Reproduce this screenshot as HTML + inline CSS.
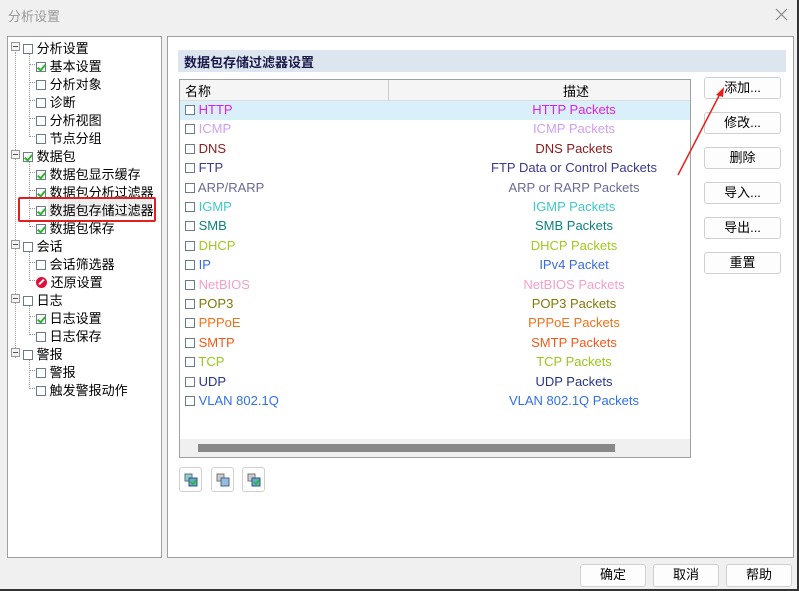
<!DOCTYPE html>
<html><head><meta charset="utf-8"><style>
*{margin:0;padding:0;box-sizing:border-box}
body{width:799px;height:591px;background:#f0f0f0;position:relative;overflow:hidden;font-family:"Liberation Sans","Noto Sans CJK SC",sans-serif;font-size:13px;color:#000}
.a{position:absolute;white-space:nowrap}
.win{position:absolute;left:0;top:0;width:799px;height:591px;border-right:2px solid #333;border-bottom:2px solid #333}
.panel{position:absolute;background:#fff;border:1px solid #a0a0a0}
.cb{display:inline-block;width:10px;height:10px;border:1px solid #6b7a8c;background:#fff;vertical-align:-1px;position:relative}
.cb.on::after{content:"";position:absolute;left:2px;top:0px;width:3px;height:6px;border-right:2px solid #2bb52b;border-bottom:2px solid #2bb52b;transform:rotate(40deg)}
.pm{display:inline-block;width:9px;height:9px;border:1px solid #999;background:#f4f4f4;position:absolute}
.pm::after{content:"";position:absolute;left:1px;top:3px;width:5px;height:1px;background:#555}
.btn{position:absolute;background:#fdfdfd;border:1px solid #d0d0d0;border-radius:3px;text-align:center;font-size:13px;line-height:20px}
.row{position:absolute;left:0;width:508px;height:19px;line-height:19px}
.row .n{position:absolute;left:5px}
.row .d{position:absolute;left:210px;width:368px;text-align:center}
.hl{position:absolute;border-left:1px dotted #999}
.hh{position:absolute;border-top:1px dotted #999;width:8px}
</style></head><body>
<div class="win"></div>
<div class="a" style="left:8px;top:6px;color:#999;font-size:13px">分析设置</div>
<svg class="a" style="left:775px;top:8px" width="13" height="13"><path d="M1 1L12 12M12 1L1 12" stroke="#888" stroke-width="1.2"/></svg>

<div class="panel" style="left:7px;top:36px;width:155px;height:522px"></div>

<div class="panel" style="left:167px;top:36px;width:627px;height:522px"></div>
<div class="a" style="left:178px;top:50px;width:608px;height:22px;background:#dde6ef"></div>
<div class="a" style="left:184px;top:52px;font-size:13px;font-weight:bold;color:#1a1a4a">数据包存储过滤器设置</div>

<div class="a" style="left:179px;top:79px;width:512px;height:379px;background:#fff;border:1px solid #a0a0a0">
  <div class="a" style="left:0;top:0;width:510px;height:21px;background:#f5f5f5;border-bottom:1px solid #ddd"></div>
  <div class="a" style="left:208px;top:0;height:21px;border-left:1px solid #ccc"></div>
  <div class="a" style="left:5px;top:1px">名称</div>
  <div class="a" style="left:383px;top:1px">描述</div>
  <div class="a" style="left:0;top:21px;width:510px;height:19px;background:#d9f0fb"></div>
  <div class="a" style="left:0;top:359px;width:510px;height:18px;background:#f0f0f0"></div>
  <div class="a" style="left:18px;top:364px;width:417px;height:8px;background:#888"></div>
</div>

<div class="btn" style="left:179px;top:467px;width:23px;height:25px"><svg width="14" height="14" style="margin-top:5px"><rect x="1" y="1" width="7" height="7" fill="#9cc" stroke="#577"/><rect x="5" y="5" width="8" height="8" fill="#6ac" stroke="#357"/><path d="M7 9l2 2 3-4" stroke="#2b2" fill="none" stroke-width="1.5"/></svg></div>
<div class="btn" style="left:211px;top:467px;width:23px;height:25px"><svg width="14" height="14" style="margin-top:5px"><rect x="1" y="1" width="7" height="7" fill="#ccc" stroke="#777"/><rect x="5" y="5" width="8" height="8" fill="#9bd" stroke="#468"/></svg></div>
<div class="btn" style="left:242px;top:467px;width:23px;height:25px"><svg width="14" height="14" style="margin-top:5px"><rect x="1" y="1" width="7" height="7" fill="#ccc" stroke="#777"/><rect x="5" y="5" width="8" height="8" fill="#6ac" stroke="#357"/><path d="M7 9l2 2 3-4" stroke="#2b2" fill="none" stroke-width="1.5"/></svg></div>

<div class="btn" style="left:704px;top:77px;width:77px;height:22px">添加...</div>
<div class="btn" style="left:704px;top:112px;width:77px;height:22px">修改...</div>
<div class="btn" style="left:704px;top:147px;width:77px;height:22px">删除</div>
<div class="btn" style="left:704px;top:182px;width:77px;height:22px">导入...</div>
<div class="btn" style="left:704px;top:217px;width:77px;height:22px">导出...</div>
<div class="btn" style="left:704px;top:252px;width:77px;height:22px">重置</div>

<svg class="a" style="left:670px;top:85px" width="60" height="95"><line x1="8" y1="90" x2="52" y2="5" stroke="#e8201a" stroke-width="1.5"/><path d="M54 2 L46 10 L53 12 Z" fill="#e8201a"/></svg>

<div class="btn" style="left:580px;top:564px;width:66px;height:23px">确定</div>
<div class="btn" style="left:653px;top:564px;width:66px;height:23px">取消</div>
<div class="btn" style="left:726px;top:564px;width:66px;height:23px">帮助</div>

<div class="hl" style="left:29px;top:53px;height:84px"></div>
<div class="hl" style="left:29px;top:161px;height:66px"></div>
<div class="hl" style="left:29px;top:251px;height:30px"></div>
<div class="hl" style="left:29px;top:305px;height:30px"></div>
<div class="hl" style="left:29px;top:359px;height:30px"></div>
<div class="hl" style="left:15px;top:52px;height:306px"></div>

<div class="pm" style="left:11px;top:42px"></div><div class="a" style="left:23px;top:38px"><span class="cb"></span> 分析设置</div>
<div class="hh" style="left:29px;top:64px"></div><div class="a" style="left:36px;top:56px"><span class="cb on"></span> 基本设置</div>
<div class="hh" style="left:29px;top:82px"></div><div class="a" style="left:36px;top:74px"><span class="cb"></span> 分析对象</div>
<div class="hh" style="left:29px;top:100px"></div><div class="a" style="left:36px;top:92px"><span class="cb"></span> 诊断</div>
<div class="hh" style="left:29px;top:118px"></div><div class="a" style="left:36px;top:110px"><span class="cb"></span> 分析视图</div>
<div class="hh" style="left:29px;top:136px"></div><div class="a" style="left:36px;top:128px"><span class="cb"></span> 节点分组</div>
<div class="pm" style="left:11px;top:150px"></div><div class="a" style="left:23px;top:146px"><span class="cb on"></span> 数据包</div>
<div class="hh" style="left:29px;top:172px"></div><div class="a" style="left:36px;top:164px"><span class="cb on"></span> 数据包显示缓存</div>
<div class="hh" style="left:29px;top:190px"></div><div class="a" style="left:36px;top:182px"><span class="cb on"></span> 数据包分析过滤器</div>
<div class="a" style="left:48px;top:199px;width:104px;height:18px;background:#eee"></div>
<div class="hh" style="left:29px;top:208px"></div><div class="a" style="left:36px;top:200px"><span class="cb on"></span> 数据包存储过滤器</div>
<div class="a" style="left:18px;top:197px;width:138px;height:25px;border:2px solid #e02020;border-radius:2px"></div>
<div class="hh" style="left:29px;top:226px"></div><div class="a" style="left:36px;top:218px"><span class="cb on"></span> 数据包保存</div>
<div class="pm" style="left:11px;top:240px"></div><div class="a" style="left:23px;top:236px"><span class="cb"></span> 会话</div>
<div class="hh" style="left:29px;top:262px"></div><div class="a" style="left:36px;top:254px"><span class="cb"></span> 会话筛选器</div>
<div class="hh" style="left:29px;top:280px"></div><div class="a" style="left:36px;top:272px"><span style="display:inline-block;width:11px;height:11px;border-radius:50%;background:#e0103a;vertical-align:-1px;position:relative"><span style="position:absolute;left:2px;top:4px;width:7px;height:2px;background:#fff;transform:rotate(-45deg)"></span></span> 还原设置</div>
<div class="pm" style="left:11px;top:294px"></div><div class="a" style="left:23px;top:290px"><span class="cb"></span> 日志</div>
<div class="hh" style="left:29px;top:316px"></div><div class="a" style="left:36px;top:308px"><span class="cb on"></span> 日志设置</div>
<div class="hh" style="left:29px;top:334px"></div><div class="a" style="left:36px;top:326px"><span class="cb"></span> 日志保存</div>
<div class="pm" style="left:11px;top:348px"></div><div class="a" style="left:23px;top:344px"><span class="cb"></span> 警报</div>
<div class="hh" style="left:29px;top:370px"></div><div class="a" style="left:36px;top:362px"><span class="cb"></span> 警报</div>
<div class="hh" style="left:29px;top:388px"></div><div class="a" style="left:36px;top:380px"><span class="cb"></span> 触发警报动作</div>

<div class="a" style="left:180px;top:100px;width:510px;height:340px;font-size:13px">
<div class="row" style="top:0;color:#e020e0"><span class="n"><span class="cb"></span> HTTP</span><span class="d">HTTP Packets</span></div>
<div class="row" style="top:19.4px;color:#d0a0f0"><span class="n"><span class="cb"></span> ICMP</span><span class="d">ICMP Packets</span></div>
<div class="row" style="top:38.8px;color:#8b1a1a"><span class="n"><span class="cb"></span> DNS</span><span class="d">DNS Packets</span></div>
<div class="row" style="top:58.2px;color:#3a3a90"><span class="n"><span class="cb"></span> FTP</span><span class="d">FTP Data or Control Packets</span></div>
<div class="row" style="top:77.6px;color:#6a6a98"><span class="n"><span class="cb"></span> ARP/RARP</span><span class="d">ARP or RARP Packets</span></div>
<div class="row" style="top:97px;color:#40c8c8"><span class="n"><span class="cb"></span> IGMP</span><span class="d">IGMP Packets</span></div>
<div class="row" style="top:116.4px;color:#108080"><span class="n"><span class="cb"></span> SMB</span><span class="d">SMB Packets</span></div>
<div class="row" style="top:135.8px;color:#a0c820"><span class="n"><span class="cb"></span> DHCP</span><span class="d">DHCP Packets</span></div>
<div class="row" style="top:155.2px;color:#3a6ae0"><span class="n"><span class="cb"></span> IP</span><span class="d">IPv4 Packet</span></div>
<div class="row" style="top:174.6px;color:#f4a0c8"><span class="n"><span class="cb"></span> NetBIOS</span><span class="d">NetBIOS Packets</span></div>
<div class="row" style="top:194px;color:#807808"><span class="n"><span class="cb"></span> POP3</span><span class="d">POP3 Packets</span></div>
<div class="row" style="top:213.4px;color:#f07018"><span class="n"><span class="cb"></span> PPPoE</span><span class="d">PPPoE Packets</span></div>
<div class="row" style="top:232.8px;color:#f05a18"><span class="n"><span class="cb"></span> SMTP</span><span class="d">SMTP Packets</span></div>
<div class="row" style="top:252.2px;color:#98c818"><span class="n"><span class="cb"></span> TCP</span><span class="d">TCP Packets</span></div>
<div class="row" style="top:271.6px;color:#283488"><span class="n"><span class="cb"></span> UDP</span><span class="d">UDP Packets</span></div>
<div class="row" style="top:291px;color:#3070e8"><span class="n"><span class="cb"></span> VLAN 802.1Q</span><span class="d">VLAN 802.1Q Packets</span></div>
</div>
</body></html>
